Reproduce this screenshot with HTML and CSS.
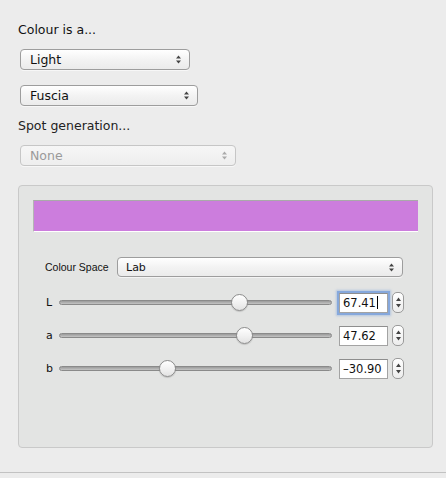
FILE: index.html
```html
<!DOCTYPE html>
<html lang="en">
<head>
    <meta charset="UTF-8">
    <meta name="viewport" content="width=device-width, initial-scale=1.0">
    <title>Colour</title>
    <link rel="stylesheet" href="styles.css">
</head>
<body>
    <div class="pane">
        <div class="label">Colour is a...</div>
        <div class="popup light"><span>Light</span><svg class="arrows" width="7" height="11" viewBox="0 0 7 11"><path d="M3.5 1.5 L6 4.5 L1 4.5 Z M3.5 9.5 L6 6.5 L1 6.5 Z" fill="#444"/></svg></div>
        <div class="popup fuscia"><span>Fuscia</span><svg class="arrows" width="7" height="11" viewBox="0 0 7 11"><path d="M3.5 1.5 L6 4.5 L1 4.5 Z M3.5 9.5 L6 6.5 L1 6.5 Z" fill="#444"/></svg></div>
        <div class="label spot">Spot generation...</div>
        <div class="popup none disabled"><span>None</span><svg class="arrows" width="7" height="11" viewBox="0 0 7 11"><path d="M3.5 1.5 L6 4.5 L1 4.5 Z M3.5 9.5 L6 6.5 L1 6.5 Z" fill="#aaa"/></svg></div>

        <div class="group">
            <div class="swatch"></div>
            <div class="space-row">
                <div class="small-label">Colour Space</div>
                <div class="popup small"><span>Lab</span><svg class="arrows" width="7" height="11" viewBox="0 0 7 11"><path d="M3.5 1.5 L6 4.5 L1 4.5 Z M3.5 9.5 L6 6.5 L1 6.5 Z" fill="#444"/></svg></div>
            </div>
            <div class="sliders">
                <div class="slider-row">
                    <div class="letter">L</div>
                    <div class="track"><div class="knob" style="left: 179px"></div></div>
                    <div class="field focus">67.41<span class="caret"></span></div>
                    <div class="stepper"><svg width="7" height="15" viewBox="0 0 7 15"><path d="M3.5 2.5 L6 6 L1 6 Z M3.5 12.5 L6 9 L1 9 Z" fill="#444"/></svg></div>
                </div>
                <div class="slider-row">
                    <div class="letter">a</div>
                    <div class="track"><div class="knob" style="left: 184px"></div></div>
                    <div class="field">47.62</div>
                    <div class="stepper"><svg width="7" height="15" viewBox="0 0 7 15"><path d="M3.5 2.5 L6 6 L1 6 Z M3.5 12.5 L6 9 L1 9 Z" fill="#444"/></svg></div>
                </div>
                <div class="slider-row">
                    <div class="letter">b</div>
                    <div class="track"><div class="knob" style="left: 107px"></div></div>
                    <div class="field">–30.90</div>
                    <div class="stepper"><svg width="7" height="15" viewBox="0 0 7 15"><path d="M3.5 2.5 L6 6 L1 6 Z M3.5 12.5 L6 9 L1 9 Z" fill="#444"/></svg></div>
                </div>
            </div>
        </div>
    </div>
    <div class="footer"></div>
</body>
</html>
```

FILE: styles.css
```css
*{
    margin: 0px;
    padding: 0px;
    box-sizing: border-box;
    font-family: 'DejaVu Sans', Verdana, sans-serif;
}
body{
    background-color: #ececec;
    width: 446px;
    height: 478px;
    overflow: hidden;
    color: #111;
}
.pane{
    padding: 22px 0px 0px 18px;
    height: 472px;
}
.label{
    font-size: 12.5px;
    line-height: 16px;
    height: 16px;
}
.label.spot{
    margin-top: 12px;
    color: #222;
}
.popup{
    display: flex;
    align-items: center;
    justify-content: space-between;
    margin-left: 2px;
    height: 21px;
    padding: 0px 7px 0px 9px;
    border: 1px solid #9d9d9d;
    border-radius: 4px;
    background: linear-gradient(#ffffff, #f3f3f3 50%, #ebebeb);
    box-shadow: 0px 1px 0px rgba(255,255,255,0.6);
    font-size: 12.5px;
}
.popup.light{
    margin-top: 11px;
    width: 170px;
}
.popup.fuscia{
    margin-top: 15px;
    width: 178px;
}
.popup.none{
    margin-top: 11px;
    width: 216px;
}
.popup.disabled{
    color: #9a9a9a;
    border-color: #c6c6c6;
    background: linear-gradient(#f6f6f6, #eeeeee);
}
.group{
    margin-top: 19px;
    width: 415px;
    height: 263px;
    border: 1px solid #c9c9c9;
    border-radius: 4px;
    background-color: #e3e4e3;
    padding: 14px 0px 0px 14px;
}
.swatch{
    width: 385px;
    height: 32px;
    background-color: #cc7ddd;
    border-top: 1px solid #a9a9a9;
    border-left: 1px solid #b4b4b4;
    border-bottom: 1px solid #ffffff;
}
.space-row{
    display: flex;
    align-items: center;
    margin-top: 25px;
    padding-left: 12px;
}
.small-label{
    flex-shrink: 0;
    white-space: nowrap;
    font-family: 'Liberation Sans', Arial, sans-serif;
    font-size: 10.5px;
    width: 72px;
}
.popup.small{
    margin-left: 0px;
    width: 286px;
    height: 20px;
    font-size: 11px;
    padding-left: 8px;
}
.sliders{
    margin-top: 15px;
    padding-left: 13px;
}
.slider-row{
    display: flex;
    align-items: center;
    height: 21px;
    margin-bottom: 12px;
}
.letter{
    width: 13px;
    font-size: 11px;
}
.track{
    position: relative;
    width: 273px;
    height: 5px;
    border: 1px solid #8a8a8a;
    border-radius: 3px;
    background: linear-gradient(#9a9a9a, #c4c4c4);
}
.knob{
    position: absolute;
    top: -7px;
    width: 17px;
    height: 17px;
    margin-left: -8px;
    border: 1px solid #8c8c8c;
    border-radius: 50%;
    background: linear-gradient(#ffffff, #efefef 60%, #e2e2e2);
    box-shadow: 0px 1px 1px rgba(0,0,0,0.15);
}
.field{
    display: flex;
    align-items: center;
    margin-left: 7px;
    width: 49px;
    height: 20px;
    padding-left: 3px;
    border: 1px solid #a3a3a3;
    border-top-color: #8e8e8e;
    background-color: #ffffff;
    font-size: 11.5px;
    color: #111;
}
.field.focus{
    box-shadow: 0px 0px 0px 2px #86a8dc, 0px 0px 2px 3px rgba(134,168,220,0.5);
}
.caret{
    display: inline-block;
    width: 1px;
    height: 13px;
    background-color: #000;
    margin-left: 1px;
}
.stepper{
    display: flex;
    align-items: center;
    justify-content: center;
    margin-left: 4px;
    width: 12px;
    height: 21px;
    border: 1px solid #9a9a9a;
    border-radius: 5px;
    background: linear-gradient(#ffffff, #ececec);
}
.footer{
    height: 6px;
    border-top: 1px solid #c2c2c2;
    background-color: #ececec;
}
```
